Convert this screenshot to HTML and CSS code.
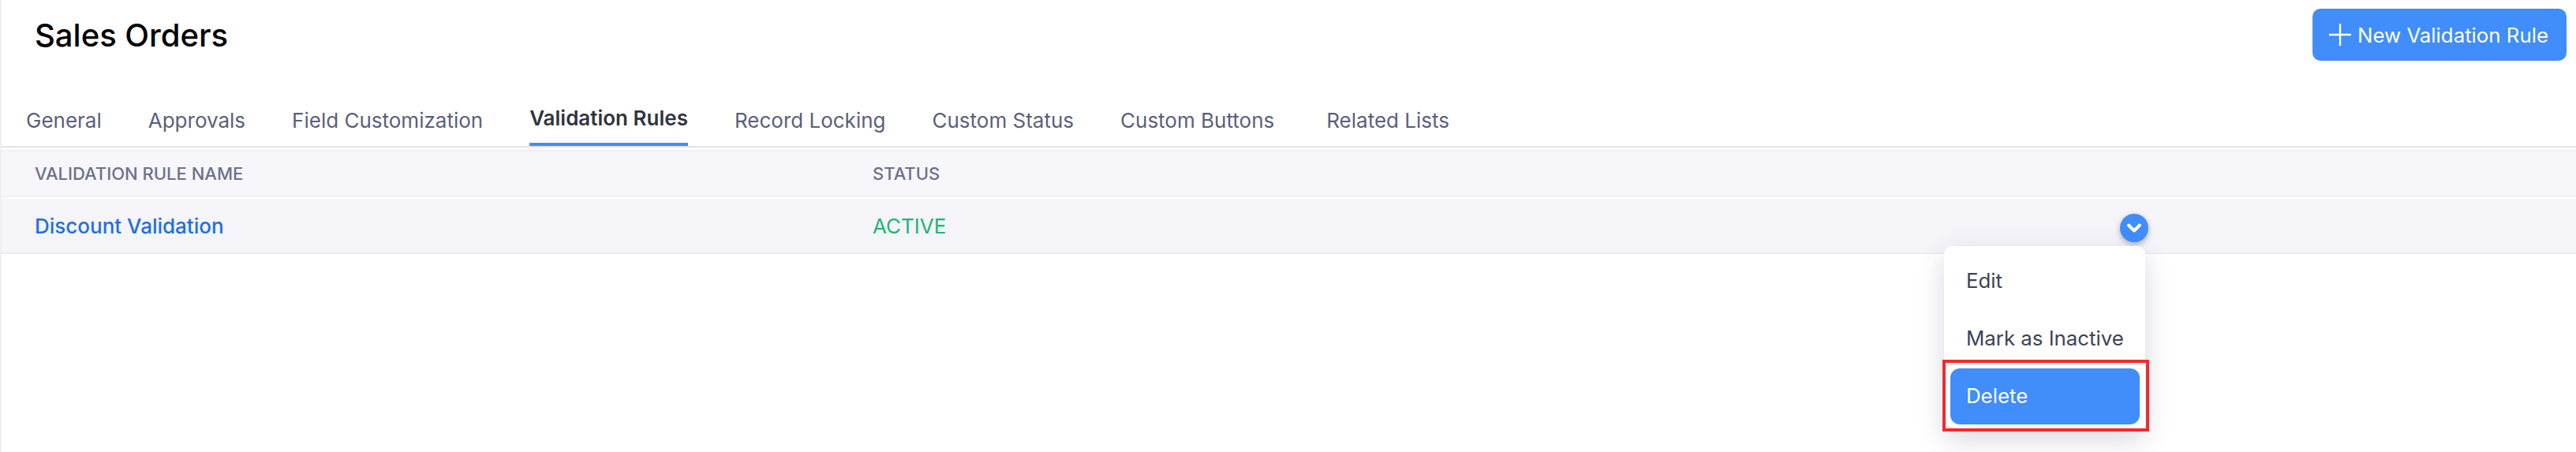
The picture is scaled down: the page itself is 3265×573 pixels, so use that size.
FILE: index.html
```html
<!DOCTYPE html>
<html lang="en">
<head>
    <meta charset="UTF-8">
    <title>Sales Orders - Validation Rules</title>
    <link rel="stylesheet" href="styles.css">
</head>
<body>

    <div class="page">
        <div class="page-header">
            <h1>Sales Orders</h1>
            <button class="new-btn">
                <svg class="plus" width="28" height="28" viewBox="0 0 28 28"><path d="M14 0V28M0 14H28" stroke="#ffffff" stroke-width="2.4" fill="none"/></svg>
                New Validation Rule
            </button>
        </div>

        <div class="tabs">
            <a class="tab">General</a>
            <a class="tab">Approvals</a>
            <a class="tab">Field Customization</a>
            <a class="tab active">Validation Rules</a>
            <a class="tab">Record Locking</a>
            <a class="tab">Custom Status</a>
            <a class="tab">Custom Buttons</a>
            <a class="tab">Related Lists</a>
        </div>

        <div class="table">
            <div class="table-row table-head">
                <div>VALIDATION RULE NAME</div>
                <div>STATUS</div>
            </div>
            <div class="table-row table-item">
                <a class="rule-name">Discount Validation</a>
                <div class="status">ACTIVE</div>
                <div class="caret">
                    <svg width="20" height="14" viewBox="0 0 20 14"><path d="M3 3.5L10 10.5L17 3.5" stroke="#ffffff" stroke-width="4" stroke-linecap="round" stroke-linejoin="round" fill="none"/></svg>
                </div>
            </div>

            <div class="menu">
                <div class="menu-item">Edit</div>
                <div class="menu-item">Mark as Inactive</div>
                <div class="menu-item selected">Delete</div>
            </div>
            <div class="highlight"></div>
        </div>
    </div>

</body>
</html>
```

FILE: styles.css
```css
* {
    box-sizing: border-box;
}

html, body {
    margin: 0;
    height: 100%;
}

body {
    font-family: Inter, "Noto Sans", sans-serif;
    background-color: #ffffff;
    overflow: hidden;
}

.page {
    height: 100%;
    border-left: 2px solid #eeeef6;
}

.page-header {
    height: 123px;
    padding: 11px 12px 0 42px;
    display: flex;
    justify-content: space-between;
    align-items: flex-start;
}

h1 {
    margin: 10px 0 0;
    font-size: 40px;
    line-height: 48px;
    font-weight: 500;
    color: #000000;
}

.new-btn {
    width: 322px;
    height: 66px;
    padding: 0 0 0 21px;
    display: flex;
    align-items: center;
    gap: 8px;
    border: none;
    border-radius: 10px;
    background-color: #408dfb;
    color: #ffffff;
    font-family: inherit;
    font-size: 25.8px;
    white-space: nowrap;
}

.tabs {
    height: 64px;
    padding-left: 31px;
    display: flex;
    gap: 59px;
    border-bottom: 2px solid #dfe1ea;
}

.tab {
    height: 62px;
    padding-top: 13px;
    font-size: 26px;
    line-height: 34px;
    color: #5a5f7d;
    white-space: nowrap;
}

.tab:last-child {
    margin-left: 7px;
}

.tab.active {
    padding-top: 10px;
    font-weight: 600;
    color: #31343f;
    border-bottom: 4px solid #408dfb;
    border-radius: 4px 4px 0 0;
}

.table {
    position: relative;
    margin-top: 3px;
}

.table-row {
    padding-left: 42px;
    display: grid;
    grid-template-columns: 1062px 1581px 36px;
    align-items: center;
}

.table-head {
    height: 60px;
    background-color: #f7f7fb;
    border-top: 2px solid #eeeef4;
    border-bottom: 2px solid #eeeef4;
    font-size: 22px;
    font-weight: 500;
    color: #6c718a;
}

.table-item {
    height: 72px;
    background-color: #f4f4f9;
    border-top: 2px solid #ffffff;
    border-bottom: 2px solid #ecedf4;
    font-size: 26px;
}

.rule-name {
    font-weight: 500;
    color: #1f6fe0;
}

.status {
    color: #22b573;
}

.caret {
    width: 36px;
    height: 36px;
    margin-top: 5px;
    display: flex;
    align-items: center;
    justify-content: center;
    border-radius: 50%;
    background-color: #408dfb;
    box-shadow: 0 3px 7px rgba(40, 40, 70, 0.35);
}

.menu {
    position: absolute;
    top: 122px;
    left: 2462px;
    width: 255px;
    padding: 7px 7px 7px 8px;
    background-color: #ffffff;
    border-radius: 10px;
    box-shadow: 0 12px 34px rgba(60, 60, 100, 0.2);
}

.menu-item {
    height: 73px;
    padding-left: 20px;
    display: flex;
    align-items: center;
    font-size: 25.8px;
    color: #3c4357;
}

.menu-item.selected {
    height: 71px;
    margin-top: 2px;
    padding-bottom: 2px;
    border-radius: 12px;
    background-color: #408dfb;
    color: #ffffff;
}

.highlight {
    position: absolute;
    top: 266px;
    left: 2460px;
    width: 262px;
    height: 91px;
    border: 4px solid #f5282d;
}
```
